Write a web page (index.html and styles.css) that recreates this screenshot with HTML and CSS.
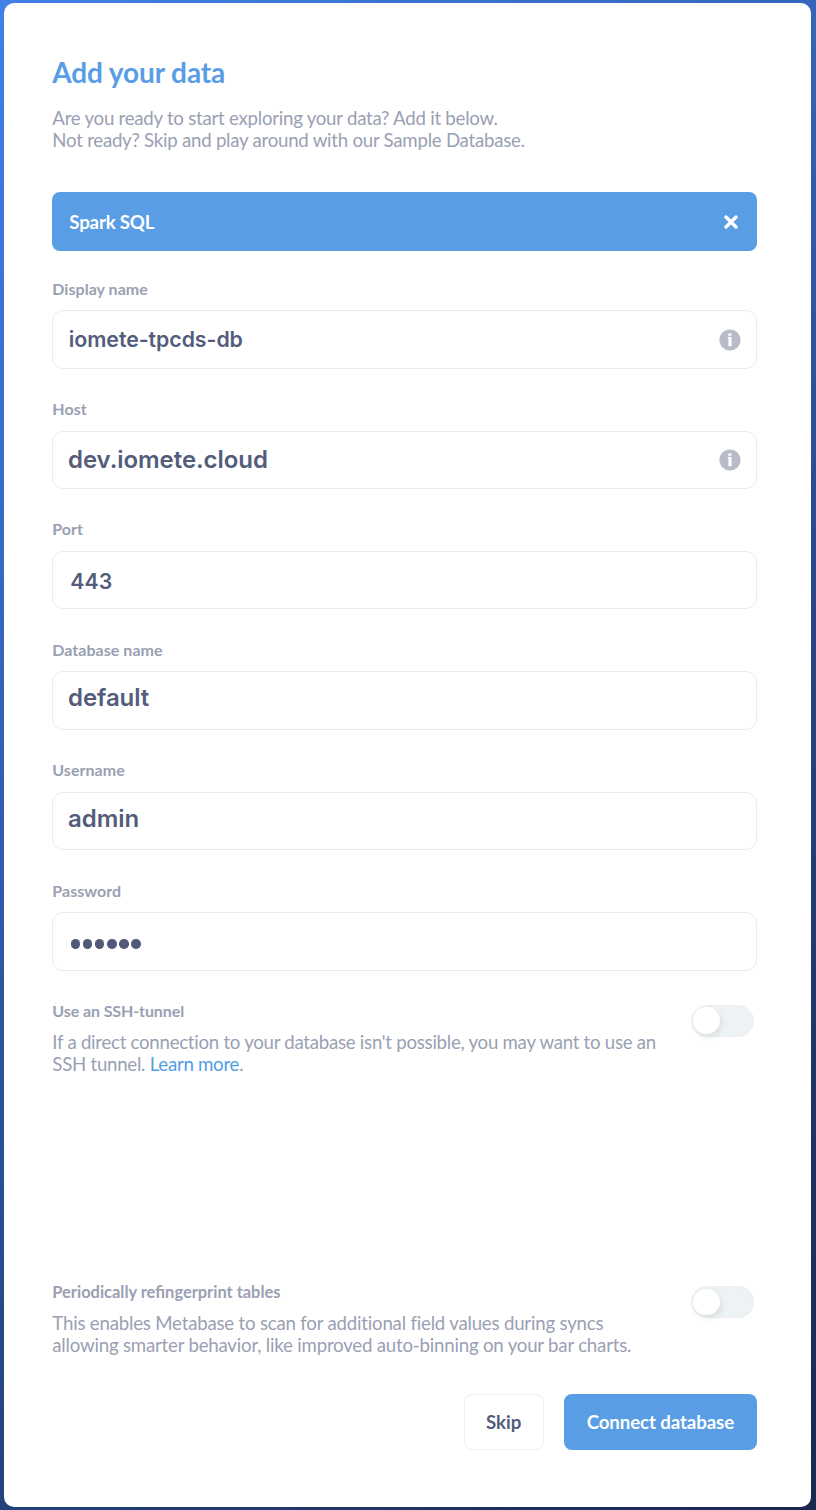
FILE: index.html
```html
<!DOCTYPE html>
<html lang="en">
<head>
<meta charset="utf-8">
<title>Add your data</title>
<link rel="stylesheet" href="styles.css">
</head>
<body>
<main class="card">
  <h1 class="title">Add your data</h1>
  <p class="text intro">Are you ready to start exploring your data? Add it below.<br>Not ready? Skip and play around with our Sample Database.</p>

  <div class="engine">
    <span class="engine-name">Spark SQL</span>
    <svg class="close" viewBox="0 0 14 14"><path d="M2 2L12 12M12 2L2 12"/></svg>
  </div>

  <form class="fields">
    <div class="field">
      <div class="label">Display name</div>
      <div class="input"><span class="value name">iomete-tpcds-db</span>
        <svg class="info" viewBox="0 0 22 22"><circle cx="11" cy="11" r="10.6"/><path d="M9.2 4.6h3.4v2.2H9.2zM8.6 8h4v9.2H9.4V9.4h-.8z"/></svg></div>
    </div>
    <div class="field">
      <div class="label">Host</div>
      <div class="input"><span class="value host">dev.iomete.cloud</span>
        <svg class="info" viewBox="0 0 22 22"><circle cx="11" cy="11" r="10.6"/><path d="M9.2 4.6h3.4v2.2H9.2zM8.6 8h4v9.2H9.4V9.4h-.8z"/></svg></div>
    </div>
    <div class="field">
      <div class="label">Port</div>
      <div class="input"><span class="value port">443</span></div>
    </div>
    <div class="field">
      <div class="label">Database name</div>
      <div class="input"><span class="value database">default</span></div>
    </div>
    <div class="field">
      <div class="label">Username</div>
      <div class="input"><span class="value user">admin</span></div>
    </div>
    <div class="field">
      <div class="label">Password</div>
      <div class="input"><span class="password"><i></i><i></i><i></i><i></i><i></i><i></i></span></div>
    </div>
  </form>

  <section class="option ssh">
    <div class="option-body">
      <div class="label">Use an SSH-tunnel</div>
      <p class="text ssh-text">If a direct connection to your database isn't possible, you may want to use an<br>SSH tunnel. <a class="link">Learn more</a>.</p>
    </div>
    <div class="toggle"><span class="knob"></span></div>
  </section>

  <section class="option scan">
    <div class="option-body">
      <div class="label">Periodically refingerprint tables</div>
      <p class="text">This enables Metabase to scan for additional field values during syncs<br>allowing smarter behavior, like improved auto-binning on your bar charts.</p>
    </div>
    <div class="toggle"><span class="knob"></span></div>
  </section>

  <div class="actions">
    <div class="button skip">Skip</div>
    <div class="button connect">Connect database</div>
  </div>
</main>
</body>
</html>
```
FILE: styles.css
```css
* { box-sizing: border-box; }
body {
  margin: 0;
  height: 1510px;
  padding: 2.5px 5.5px 3.5px 4px;
  overflow: hidden;
  font-family: Lato, sans-serif;
  background:
    radial-gradient(ellipse at bottom right, rgba(20, 24, 55, .5), transparent 70%),
    linear-gradient(to right, transparent, rgba(20, 28, 60, .26)),
    linear-gradient(#4080e8, #3a6ed0 27%, #2b559f 68%, #24427a);
}
.card {
  height: 1504px;
  padding: 52.5px 54px 0 48.3px;
  border-radius: 10px;
  background: #fff;
}
.title {
  margin: 0;
  line-height: 34px;
  font-size: 28px;
  font-weight: 700;
  letter-spacing: -.12px;
  color: #589de5;
}
.text {
  margin: 0;
  font-size: 18.67px;
  line-height: 22.4px;
  letter-spacing: -.25px;
  color: #9aa0b3;
  white-space: nowrap;
}
.intro { margin-top: 17.8px; }
.engine {
  display: flex;
  align-items: center;
  justify-content: space-between;
  height: 58.5px;
  margin-top: 40.7px;
  padding: 0 19px 0 17px;
  border-radius: 8px;
  background: #599de5;
  color: #fff;
}
.engine-name { font-size: 18.67px; font-weight: 700; letter-spacing: -.18px; padding-top: 1px; }
.close {
  width: 14px;
  height: 14px;
  stroke: #fff;
  stroke-width: 3.4;
  stroke-linecap: round;
}
.fields {
  display: grid;
  gap: 30.4px;
  margin-top: 27.9px;
}
.label {
  height: 20px;
  line-height: 20px;
  font-size: 16px;
  font-weight: 700;
  letter-spacing: .04px;
  color: #9aa0b3;
}
.input {
  display: flex;
  align-items: center;
  justify-content: space-between;
  height: 58.4px;
  margin-top: 11.6px;
  padding: 0 14.5px 0 15.5px;
  border: 1.4px solid #ececee;
  border-radius: 11px;
}
.value {
  font-family: Inter, sans-serif;
  line-height: 30px;
  font-weight: 600;
  color: #535d7b;
}
.name { font-size: 21.3px; letter-spacing: -.05px; padding-bottom: 1px; }
.host, .database, .user { font-size: 24px; letter-spacing: -.06px; margin-left: -.8px; }
.host { padding-bottom: .5px; }
.port { font-size: 21.3px; padding: 2px 0 0 1.5px; }
.database { padding-bottom: 5px; }
.user { padding-bottom: 4px; }
.info { width: 22px; height: 22px; margin-top: 1.2px; fill: #b8bbc9; }
.info path { fill: #fff; }
.password { display: flex; gap: 2.6px; padding: 5px 0 0 2px; }
.password i {
  width: 9.5px;
  height: 9.5px;
  border-radius: 50%;
  background: #505a78;
}
.option {
  display: flex;
  justify-content: space-between;
  padding-right: 2.5px;
}
.option .text { margin-top: 9.7px; }
.ssh { margin-top: 30.4px; height: 281.3px; }
.ssh .label { letter-spacing: -.1px; }
.ssh .text { letter-spacing: -.27px; }
.scan .label { font-size: 16.43px; letter-spacing: 0; }
.scan .text { letter-spacing: -.21px; }
.link { color: #509ee3; }
.toggle {
  width: 63px;
  height: 32px;
  margin-top: 4px;
  padding: 2.5px 1px;
  border: 1px solid #eceeef;
  border-radius: 16px;
  background: #edf2f5;
}
.knob {
  display: block;
  width: 26.5px;
  height: 26.5px;
  margin-top: -1px;
  border-radius: 50%;
  background: #fff;
  box-shadow: 2px 3px 6px rgba(0, 0, 0, .08);
}
.actions {
  display: flex;
  justify-content: flex-end;
  gap: 20.5px;
  margin-top: 37px;
}
.button {
  display: flex;
  align-items: center;
  justify-content: center;
  height: 56px;
  padding-top: 1px;
  border-radius: 8px;
  font-size: 18.67px;
  font-weight: 700;
}
.skip {
  width: 80px;
  border: 1.3px solid #f2f0f2;
  color: #535c7b;
}
.connect { width: 192.3px; background: #599de5; color: #fff; letter-spacing: -.09px; }
```
